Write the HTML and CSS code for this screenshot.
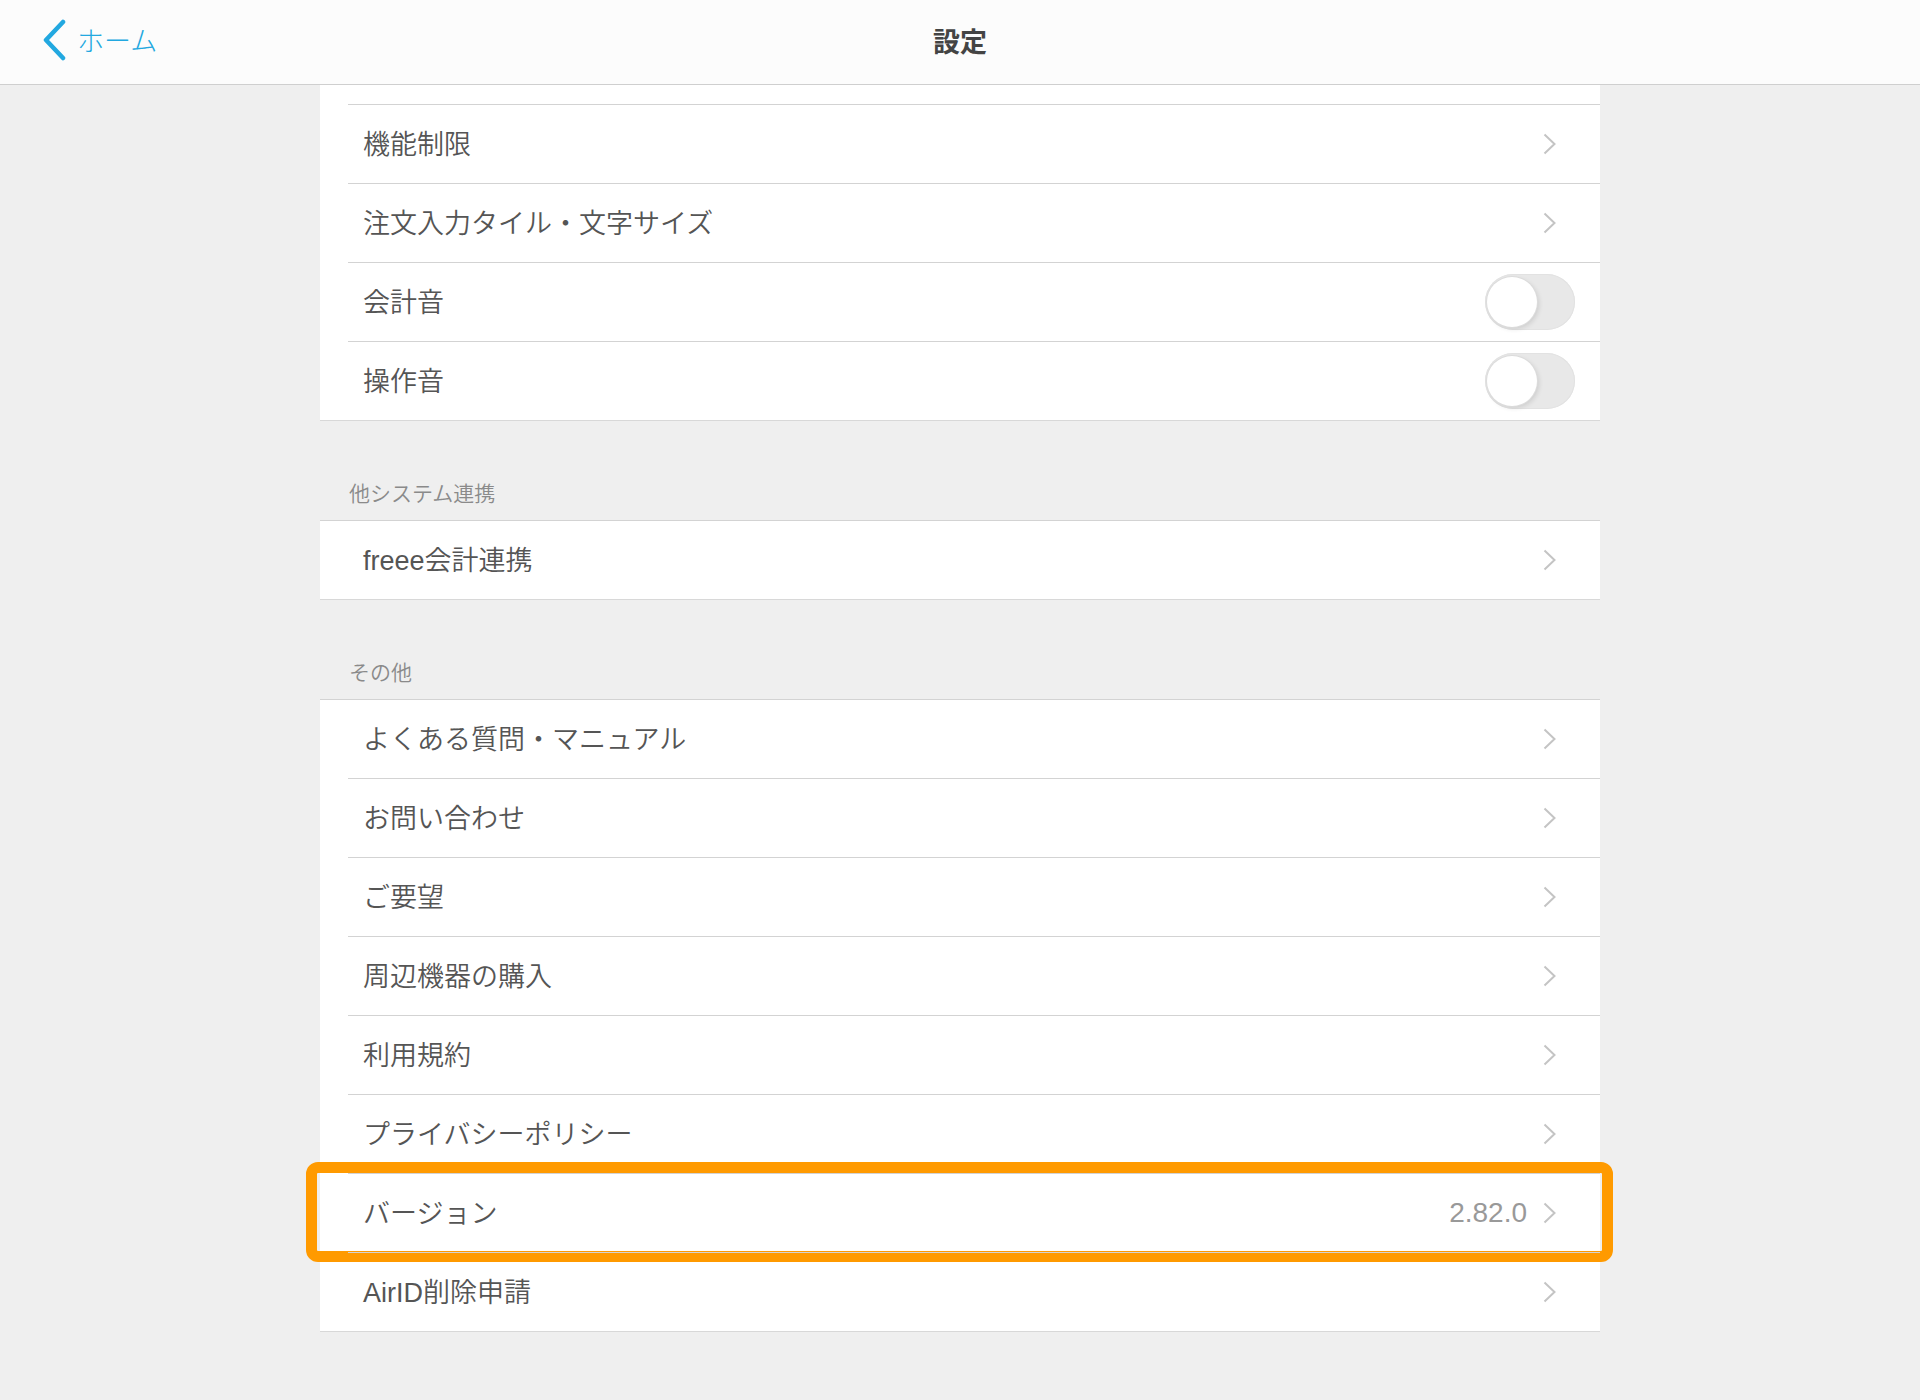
FILE: index.html
```html
<!DOCTYPE html>
<html lang="ja">
<head>
<meta charset="utf-8">
<title>設定</title>
<link rel="stylesheet" href="styles.css">
</head>
<body>
<header class="navbar">
  <a class="back" href="#">
    <svg class="back-icon" width="26" height="42" viewBox="0 0 26 42"><polyline points="21,3 4,21 21,39" fill="none" stroke="#22a8e0" stroke-width="4.5" stroke-linecap="round" stroke-linejoin="round"/></svg>
    <span class="back-label">ホーム</span>
  </a>
  <h1 class="title">設定</h1>
</header>

<main class="content">
  <section class="card card-cut">
    <div class="row row-partial"></div>
    <div class="row"><div class="row-inner"><span class="label">機能制限</span><svg class="chev" width="13" height="22" viewBox="0 0 13 22"><polyline points="1.5,1.5 11.5,11 1.5,20.5" fill="none" stroke="#c4c4c4" stroke-width="2"/></svg></div></div>
    <div class="row"><div class="row-inner"><span class="label">注文入力タイル・文字サイズ</span><svg class="chev" width="13" height="22" viewBox="0 0 13 22"><polyline points="1.5,1.5 11.5,11 1.5,20.5" fill="none" stroke="#c4c4c4" stroke-width="2"/></svg></div></div>
    <div class="row"><div class="row-inner row-switch"><span class="label">会計音</span><span class="switch"><span class="knob"></span></span></div></div>
    <div class="row"><div class="row-inner row-switch"><span class="label">操作音</span><span class="switch"><span class="knob"></span></span></div></div>
  </section>

  <h2 class="section-title">他システム連携</h2>
  <section class="card">
    <div class="row"><div class="row-inner"><span class="label">freee会計連携</span><svg class="chev" width="13" height="22" viewBox="0 0 13 22"><polyline points="1.5,1.5 11.5,11 1.5,20.5" fill="none" stroke="#c4c4c4" stroke-width="2"/></svg></div></div>
  </section>

  <h2 class="section-title">その他</h2>
  <section class="card">
    <div class="row"><div class="row-inner"><span class="label">よくある質問・マニュアル</span><svg class="chev" width="13" height="22" viewBox="0 0 13 22"><polyline points="1.5,1.5 11.5,11 1.5,20.5" fill="none" stroke="#c4c4c4" stroke-width="2"/></svg></div></div>
    <div class="row"><div class="row-inner"><span class="label">お問い合わせ</span><svg class="chev" width="13" height="22" viewBox="0 0 13 22"><polyline points="1.5,1.5 11.5,11 1.5,20.5" fill="none" stroke="#c4c4c4" stroke-width="2"/></svg></div></div>
    <div class="row"><div class="row-inner"><span class="label">ご要望</span><svg class="chev" width="13" height="22" viewBox="0 0 13 22"><polyline points="1.5,1.5 11.5,11 1.5,20.5" fill="none" stroke="#c4c4c4" stroke-width="2"/></svg></div></div>
    <div class="row"><div class="row-inner"><span class="label">周辺機器の購入</span><svg class="chev" width="13" height="22" viewBox="0 0 13 22"><polyline points="1.5,1.5 11.5,11 1.5,20.5" fill="none" stroke="#c4c4c4" stroke-width="2"/></svg></div></div>
    <div class="row"><div class="row-inner"><span class="label">利用規約</span><svg class="chev" width="13" height="22" viewBox="0 0 13 22"><polyline points="1.5,1.5 11.5,11 1.5,20.5" fill="none" stroke="#c4c4c4" stroke-width="2"/></svg></div></div>
    <div class="row"><div class="row-inner"><span class="label">プライバシーポリシー</span><svg class="chev" width="13" height="22" viewBox="0 0 13 22"><polyline points="1.5,1.5 11.5,11 1.5,20.5" fill="none" stroke="#c4c4c4" stroke-width="2"/></svg></div></div>
    <div class="row row-highlight"><div class="row-inner"><span class="label">バージョン</span><span class="value">2.82.0</span><svg class="chev" width="13" height="22" viewBox="0 0 13 22"><polyline points="1.5,1.5 11.5,11 1.5,20.5" fill="none" stroke="#c4c4c4" stroke-width="2"/></svg></div><div class="highlight"></div></div>
    <div class="row"><div class="row-inner"><span class="label">AirID削除申請</span><svg class="chev" width="13" height="22" viewBox="0 0 13 22"><polyline points="1.5,1.5 11.5,11 1.5,20.5" fill="none" stroke="#c4c4c4" stroke-width="2"/></svg></div></div>
  </section>
</main>
</body>
</html>
```

FILE: styles.css
```css
* { box-sizing: border-box; }
html, body { margin: 0; padding: 0; }
body {
  background: #efefef;
  font-family: "Liberation Sans", "Noto Sans CJK JP", sans-serif;
  color: #555;
  min-height: 1400px;
}

.navbar {
  height: 85px;
  background: #fcfcfc;
  border-bottom: 1px solid #cfcfcf;
  display: flex;
  align-items: center;
  justify-content: center;
  position: relative;
}
.back {
  position: absolute;
  left: 42px;
  top: 19px;
  display: flex;
  align-items: center;
  gap: 9px;
  text-decoration: none;
  color: #22a8e0;
}
.back-icon { display: block; }
.back-label {
  font-size: 27px;
  font-weight: 300;
  line-height: 42px;
  position: relative;
  top: 2px;
}
.title {
  margin: 0;
  padding-top: 1px;
  font-size: 27px;
  font-weight: 700;
  color: #444;
  line-height: 36px;
}

.content {
  width: 1280px;
  margin: 0 auto;
}

.card {
  background: #fff;
  border-top: 1px solid #d3d3d3;
  border-bottom: 1px solid #d8d8d8;
}
.card-cut { border-top: none; }

.row { position: relative; }
.row-partial { height: 19px; }
.row-inner {
  margin-left: 28px;
  height: 79px;
  padding: 0 44px 0 15px;
  border-top: 1px solid #d3d3d3;
  display: flex;
  align-items: center;
}
.card > .row:first-child .row-inner { border-top: none; height: 78px; }
.row-switch { padding-right: 25px; }

.label {
  flex: 1;
  font-size: 27px;
  font-weight: 350;
  color: #555;
  line-height: 36px;
  position: relative;
  top: 1px;
}
.value {
  font-size: 28px;
  color: #999;
  margin-right: 16px;
  line-height: 36px;
}
.chev { display: block; flex: none; }

.switch {
  width: 90px;
  height: 56px;
  border-radius: 28px;
  background: #e8e8e8;
  box-shadow: inset 0 0 0 1px #e2e2e2;
  position: relative;
  flex: none;
}
.knob {
  position: absolute;
  left: 2px;
  top: 3px;
  width: 50px;
  height: 50px;
  border-radius: 50%;
  background: #fff;
  box-shadow: 0 0 0 1px #dcdcdc, 2px 2px 5px rgba(0,0,0,0.12);
}

.section-title {
  margin: 0;
  padding: 58px 0 11px 29px;
  font-size: 21px;
  font-weight: 350;
  line-height: 30px;
  color: #8a8a8a;
}

.highlight {
  position: absolute;
  top: -11px;
  bottom: -10px;
  left: -14px;
  right: -13px;
  border: 11px solid #ff9a00;
  border-radius: 12px;
  pointer-events: none;
}
```
